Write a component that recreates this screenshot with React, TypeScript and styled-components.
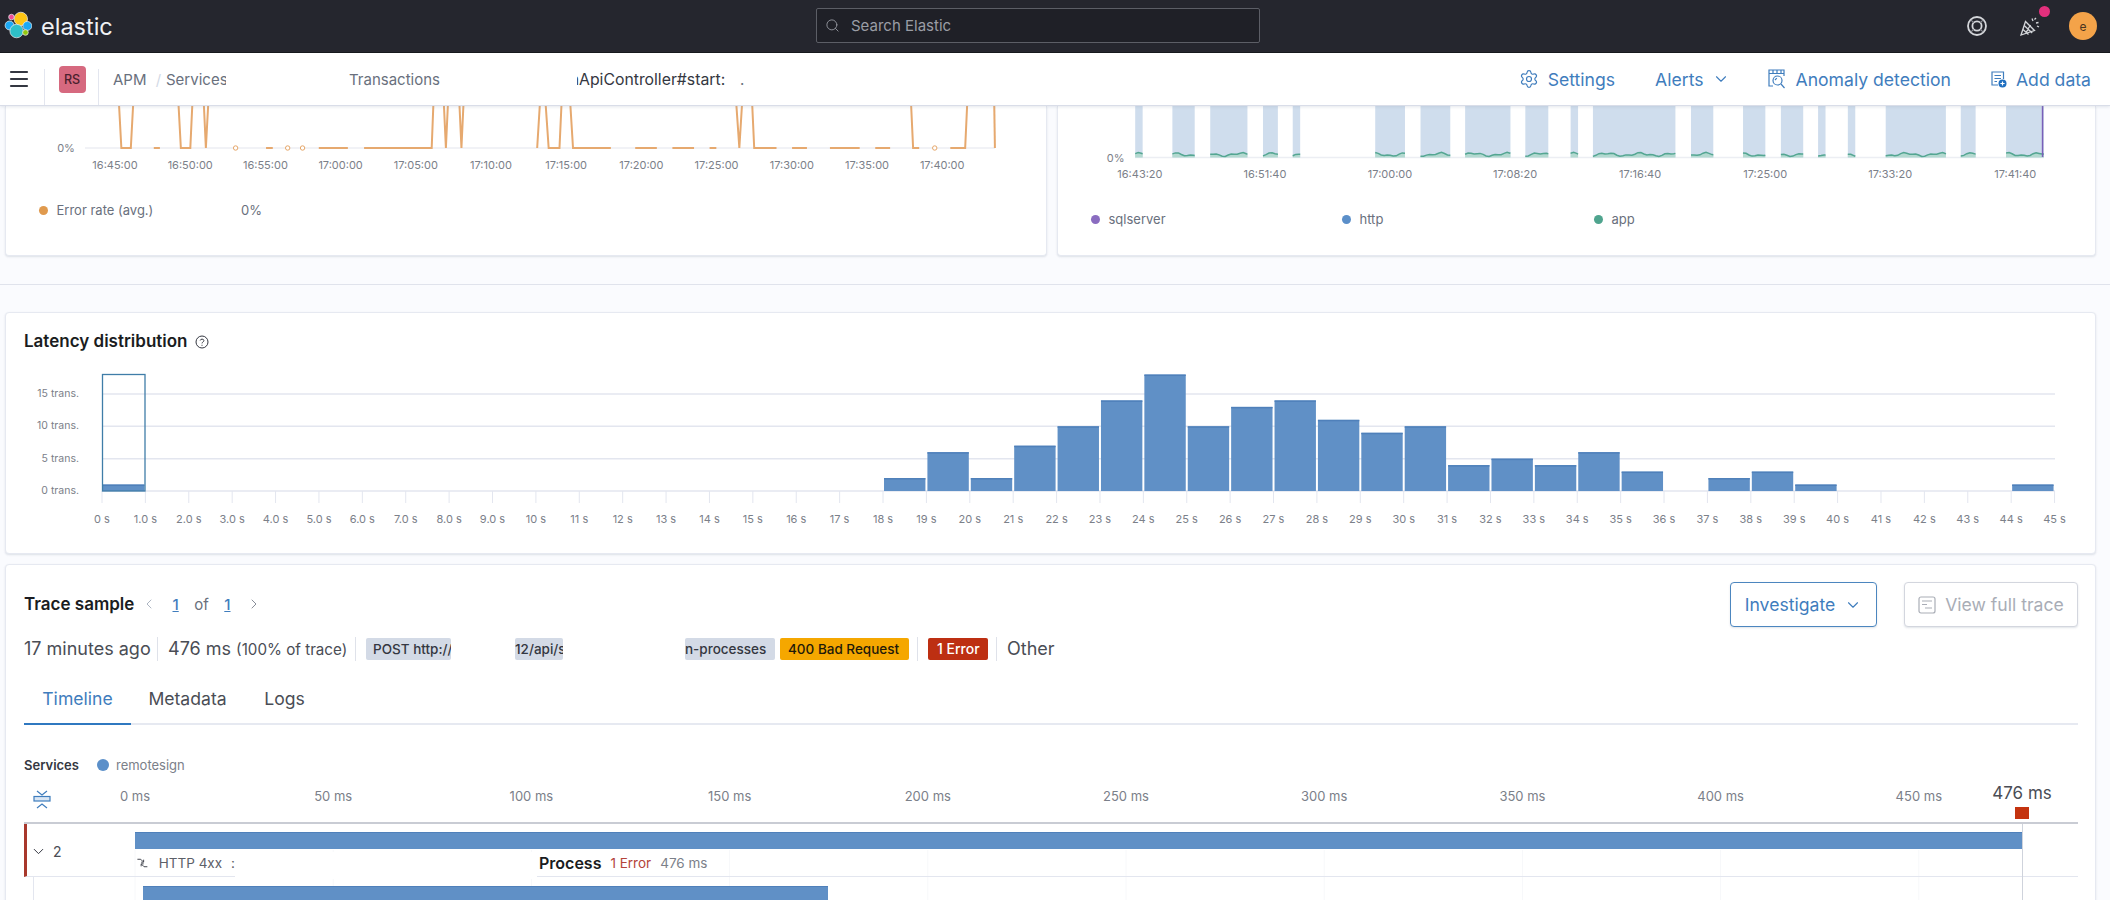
import React from 'react'
import styled, { createGlobalStyle } from 'styled-components'
import { ChevronDown, ChevronLeft, ChevronRight, Menu, Search, Settings } from 'lucide-react'

const GlobalStyle = createGlobalStyle`
  html, body {
    margin: 0;
    padding: 0;
    height: 900px;
    overflow: hidden;
    background: #fafbfe;
    font-family: Inter, "Noto Sans", sans-serif;
    color: #343741;
  }
  svg text {
    font-family: Inter, "Noto Sans", sans-serif;
  }
`

const BLUE = '#3f7dbd'
const ux = (u: number) => u / 1.479
const ux2 = (u: number) => 1050 + u / 1.479

const Page = styled.div`
  width: 2110px;
  height: 900px;
  overflow: hidden;
`

const TopBar = styled.header`
  height: 52px;
  background: #25262e;
  border-bottom: 1px solid #111318;
  display: flex;
  align-items: center;
  position: relative;
`

const Brand = styled.div`
  display: flex;
  align-items: center;
  width: 816px;
  padding-left: 4px;
  box-sizing: border-box;
  color: #f0f1f3;
  font-size: 23.5px;
  gap: 9px;
  svg {
    margin-bottom: 3px;
  }
`

const SearchBox = styled.div`
  width: 444px;
  height: 35px;
  margin-bottom: 2px;
  box-sizing: border-box;
  border: 1px solid #5c5e66;
  border-radius: 2px;
  background: #1f2027;
  display: flex;
  align-items: center;
  padding-left: 8px;
  gap: 11px;
  color: #9a9da5;
  font-size: 15px;
`

const TopIcons = styled.div`
  margin-left: auto;
  display: flex;
  align-items: center;
  padding-right: 13px;
  color: #d4d6da;
`

const IconSlot = styled.span<{ $w: number }>`
  width: ${(p) => p.$w}px;
  display: flex;
  justify-content: center;
  position: relative;
`

const Ping = styled.span`
  position: absolute;
  top: -9px;
  right: 19px;
  width: 11px;
  height: 11px;
  border-radius: 50%;
  background: #e3307d;
`

const Avatar = styled.span`
  width: 28px;
  height: 28px;
  border-radius: 50%;
  background: #f4a349;
  color: #4b3520;
  font-size: 12px;
  display: flex;
  align-items: center;
  justify-content: center;
`

const SubBar = styled.nav`
  height: 53px;
  box-sizing: border-box;
  background: #fff;
  border-bottom: 1px solid #d9dde8;
  box-shadow: 0 1px 3px rgba(152, 162, 179, 0.25);
  display: flex;
  align-items: center;
  position: relative;
  font-size: 15px;
  color: #69707d;
`

const NavCell = styled.div<{ $w: number; $pl?: number }>`
  width: ${(p) => p.$w}px;
  height: 100%;
  flex: none;
  display: flex;
  align-items: center;
  justify-content: ${(p) => (p.$pl ? 'flex-start' : 'center')};
  padding-left: ${(p) => p.$pl ?? 0}px;
  box-sizing: border-box;
  position: relative;
  &::after {
    content: '';
    position: absolute;
    right: 0;
    bottom: 0;
    width: 1px;
    height: 36px;
    background: #e3e6ef;
  }
`

const RsBadge = styled.span`
  width: 27px;
  height: 27px;
  border-radius: 4px;
  background: #d6697f;
  color: #4a1f2d;
  font-size: 12.5px;
  font-weight: 500;
  display: flex;
  align-items: center;
  justify-content: center;
`

const Crumbs = styled.div`
  display: flex;
  align-items: center;
  padding-left: 14px;
`

const Crumb = styled.span<{ $w: number; $ml?: number; $indent?: number }>`
  width: ${(p) => p.$w}px;
  margin-left: ${(p) => p.$ml ?? 0}px;
  text-indent: ${(p) => p.$indent ?? 0}px;
  overflow: hidden;
  white-space: nowrap;
  flex: none;
`

const CrumbSlash = styled(Crumb)`
  color: #d3dae6;
  text-align: center;
`

const CrumbCurrent = styled(Crumb)`
  color: #343741;
  font-size: 15.8px;
`

const NavLinks = styled.div`
  margin-left: auto;
  display: flex;
  align-items: center;
  padding-right: 19px;
  color: ${BLUE};
  font-size: 17.6px;
`

const NavLink = styled.span<{ $ml: number; $gap: number }>`
  display: flex;
  align-items: center;
  margin-left: ${(p) => p.$ml}px;
  gap: ${(p) => p.$gap}px;
  white-space: nowrap;
`

const Main = styled.main`
  padding: 0 14px 0 5px;
`

const TopRow = styled.div`
  display: grid;
  grid-template-columns: 1042px 1039px;
  gap: 10px;
  height: 150px;
`

const Card = styled.section`
  background: #fff;
  border: 1px solid #e6e9f1;
  border-radius: 4px;
  box-shadow: 0 1px 2px rgba(152, 162, 179, 0.3);
  box-sizing: border-box;
`

const TopCard = styled(Card)`
  border-top: none;
  border-radius: 0 0 4px 4px;
  overflow: hidden;
`

const ChartSvg = styled.svg`
  display: block;
`

const Legend = styled.div<{ $mt: number }>`
  display: flex;
  margin-top: ${(p) => p.$mt}px;
  font-size: 13px;
  color: #69707d;
  align-items: center;
  height: 18px;
  padding-left: 33px;
`

const LegendItem = styled.span<{ $w: number }>`
  width: ${(p) => p.$w}px;
  display: flex;
  align-items: center;
  gap: 8.5px;
  flex: none;
`

const Dot = styled.i<{ $c: string; $size?: number }>`
  width: ${(p) => p.$size ?? 9}px;
  height: ${(p) => p.$size ?? 9}px;
  border-radius: 50%;
  background: ${(p) => p.$c};
  flex: none;
`

const Divider = styled.hr`
  border: none;
  height: 1px;
  background: #e0e3ec;
  margin: 28px -14px 27px -5px;
`

const LatencyCard = styled(Card)`
  height: 242px;
`

const CardTitle = styled.h2`
  margin: 0;
  padding: 17px 0 0 18px;
  height: 29px;
  font-size: 17px;
  line-height: 22px;
  font-weight: 600;
  color: #1a1c21;
  display: flex;
  align-items: flex-start;
  gap: 7px;
  svg {
    margin-top: 5px;
  }
`

const TraceCard = styled(Card)`
  margin-top: 10px;
  height: 400px;
  padding: 17px 17px 0 18px;
  overflow: hidden;
`

const TraceHead = styled.div`
  display: flex;
  align-items: center;
  height: 45px;
`

const TraceTitle = styled.h2`
  margin: 0 0 2px;
  font-size: 17px;
  font-weight: 600;
  color: #1a1c21;
  width: 117px;
`

const Pager = styled.div`
  display: flex;
  align-items: center;
  font-size: 15px;
  color: #69707d;
  gap: 15.5px;
  margin-bottom: 1px;
`

const PageLink = styled.a`
  color: ${BLUE};
  font-weight: 500;
  text-decoration: underline;
`

const TraceButton = styled.button<{ $off?: boolean; $ml: number | 'auto'; $w: number }>`
  width: ${(p) => p.$w}px;
  height: 45px;
  margin-left: ${(p) => (p.$ml === 'auto' ? 'auto' : `${p.$ml}px`)};
  border: 1px solid ${(p) => (p.$off ? '#d3d6de' : '#4c86bf')};
  border-radius: 4px;
  background: #fff;
  color: ${(p) => (p.$off ? '#a9adb6' : BLUE)};
  font: 400 17.6px Inter, sans-serif;
  display: flex;
  align-items: center;
  justify-content: center;
  gap: 9px;
  padding: 0;
  box-shadow: 0 1px 2px rgba(152, 162, 179, 0.3);
`

const MetaRow = styled.div`
  display: flex;
  align-items: center;
  height: 24px;
  margin-top: 10px;
  font-size: 18px;
  color: #4a4d55;
`

const MetaPart = styled.span<{ $sep?: boolean; $w: number; $pl?: number }>`
  width: ${(p) => p.$w}px;
  height: 24px;
  line-height: 24px;
  padding-left: ${(p) => p.$pl ?? 0}px;
  flex: none;
  white-space: nowrap;
  border-right: ${(p) => (p.$sep ? '1px solid #dfe2ea' : 'none')};
  small {
    font-size: 15.2px;
  }
`

const Badge = styled.span<{ $bg?: string; $fg?: string; $w: number; $ml?: number; $pl?: number; $fs?: number }>`
  width: ${(p) => p.$w}px;
  height: 22px;
  margin-left: ${(p) => p.$ml ?? 0}px;
  padding-left: ${(p) => p.$pl ?? 0}px;
  flex: none;
  overflow: hidden;
  white-space: nowrap;
  box-sizing: border-box;
  border-radius: 2px;
  background: ${(p) => p.$bg ?? '#d3dae6'};
  color: ${(p) => p.$fg ?? '#343741'};
  font-size: ${(p) => p.$fs ?? 13.5}px;
  font-weight: 500;
  line-height: 22px;
`

const Tabs = styled.div`
  display: flex;
  margin-top: 12px;
  height: 50px;
  box-sizing: content-box;
  border-bottom: 2px solid #e6e9f1;
`

const Tab = styled.span<{ $active?: boolean; $w: number }>`
  width: ${(p) => p.$w}px;
  height: 50px;
  box-sizing: content-box;
  display: flex;
  align-items: center;
  justify-content: center;
  font-size: 17.6px;
  font-weight: 400;
  color: ${(p) => (p.$active ? BLUE : '#4a4d55')};
  border-bottom: 2px solid ${(p) => (p.$active ? '#2f78c0' : 'transparent')};
`

const ServicesRow = styled.div`
  display: flex;
  align-items: center;
  height: 20px;
  margin-top: 30px;
  gap: 7px;
  font-size: 13px;
  color: #7b8089;
  b {
    color: #343741;
    font-weight: 600;
    margin-right: 11px;
  }
`

const Waterfall = styled.div`
  position: relative;
  border-top: 2px solid #c9ccd4;
`

const FaintGrid = styled.svg`
  position: absolute;
  left: 0;
  top: 0;
  pointer-events: none;
`

const Row = styled.div`
  height: 52px;
  position: relative;
  border-left: 3px solid #a8382c;
  border-bottom: 1px solid #e3e6ef;
  display: flex;
`

const RowCount = styled.div`
  width: 108px;
  flex: none;
  display: flex;
  align-items: center;
  gap: 6px;
  padding-left: 3px;
  box-sizing: border-box;
  font-size: 14px;
  color: #4a4d55;
  padding-top: 2px;
`

const RowBody = styled.div`
  flex: 1;
  padding-top: 8px;
`

const Bar = styled.div<{ $w: number; $ml?: number }>`
  width: ${(p) => p.$w}px;
  height: 17px;
  margin-left: ${(p) => p.$ml ?? 0}px;
  background: #6090c6;
  border-top: 1px solid #4f80ba;
  box-sizing: border-box;
  position: relative;
`

const SpanLabel = styled.div`
  display: flex;
  align-items: center;
  height: 27px;
  font-size: 13.5px;
  color: #5c6068;
`

const HttpTag = styled.span`
  width: 100px;
  display: flex;
  align-items: center;
  gap: 11px;
  white-space: nowrap;
  flex: none;
  padding-left: 2px;
  box-sizing: border-box;
  overflow: hidden;
`

const HttpRest = styled.span`
  margin-left: -2px;
`

const SpanName = styled.strong`
  font-size: 16px;
  font-weight: 600;
  color: #1a1c21;
  margin-left: 304px;
  position: relative;
`

const SpanError = styled.span`
  color: #b4443a;
  margin-left: 9px;
  position: relative;
`

const SpanTime = styled.span`
  margin-left: 9px;
  color: #7b8089;
  position: relative;
`

const Mask = styled.div`
  position: absolute;
  left: 208px;
  width: 302px;
  top: 28px;
  height: 27px;
  background: #fff;
`

const ChildRow = styled.div`
  margin-left: 9px;
  border-left: 1px solid #e3e6ef;
  padding-top: 9px;
  position: relative;
  height: 40px;
`

const End = styled.div`
  position: absolute;
  left: 1998px;
  top: 0;
  width: 1px;
  height: 90px;
  background: #cfd3dc;
`

const ElasticLogo = () => (
  <svg width="28" height="28" viewBox="2 2 30 30">
    <g stroke="#e8e9ec" strokeWidth="0.8">
      <circle cx="20" cy="10.5" r="7.2" fill="#fec514" />
      <circle cx="10" cy="8.5" r="3" fill="#f04e98" />
      <circle cx="8" cy="17.5" r="4.8" fill="#1ba9f5" />
      <circle cx="27" cy="18" r="4.8" fill="#1ba9f5" />
      <circle cx="15.5" cy="23.5" r="7.2" fill="#2ec0c8" />
      <circle cx="25" cy="25" r="3" fill="#93c90e" />
    </g>
  </svg>
)

const RingIcon = () => (
  <svg width="22" height="22" viewBox="0 0 22 22" fill="none" stroke="#d4d6da" strokeWidth="1.8">
    <circle cx="11" cy="11" r="9" />
    <circle cx="11" cy="11" r="4.6" />
    <path d="M4.8 4.8l3 3M17.2 4.8l-3 3M4.8 17.2l3-3M17.2 17.2l-3-3" stroke="#8e9097" strokeWidth="1.1" />
  </svg>
)

const CheerIcon = () => (
  <svg width="22" height="22" viewBox="0 0 22 22" fill="none" stroke="#d4d6da" strokeWidth="1.3">
    <path d="M2 20L6.5 6.5L15.5 15.5Z" />
    <path d="M4 14.5l5.5 5M5.2 10.5l8 7.5M9 14l2.5-4M7 17l3-3" />
    <path d="M13 3.5l1 2.5M17 8l2.5-.5M15.5 4.5l1.5-1.5M18 11l2 1" />
  </svg>
)

const AnomalyIcon = () => (
  <svg width="18" height="20" viewBox="0 0 18 20" fill="none" stroke={BLUE} strokeWidth="1.2">
    <path d="M5 17H1V1h15v6" />
    <path d="M1 4.5h15M5 1v3.5M9 1v3.5M13 1v3.5" />
    <circle cx="9.5" cy="11.5" r="4.5" />
    <path d="M13 15l3.5 4" />
    <path d="M7 11l1.8-1.8" />
  </svg>
)

const AddDataIcon = () => (
  <svg width="16" height="17" viewBox="0 0 16 17" fill="none" stroke={BLUE} strokeWidth="1.2">
    <path d="M7 14H1V1h11.5v7" />
    <path d="M3.5 4.5h6.5M3.5 7.5h6.5M3.5 10.5h2.5" />
    <circle cx="11.5" cy="12.5" r="4" fill="#1f6fc0" stroke="none" />
    <path d="M11.5 10.4v4.2M9.4 12.5h4.2" stroke="#fff" />
  </svg>
)

const TraceDocIcon = () => (
  <svg width="18" height="18" viewBox="0 0 18 18" fill="none" stroke="#a9adb6" strokeWidth="1.2">
    <rect x="1" y="1" width="16" height="16" rx="2" />
    <path d="M4 5h10M4 8.5h5M7 12h7" />
  </svg>
)

const HttpIcon = () => (
  <svg width="13" height="14" viewBox="0 0 13 14" fill="none" stroke="#343741" strokeWidth="1.1">
    <path d="M0.5 2.5h4l3 3M5 6h3V3" />
    <path d="M12.5 11.5h-4l-3-3M8 8H5v3" />
  </svg>
)

const HelpIcon = () => (
  <svg width="14" height="14" viewBox="0 0 14 14" fill="none" stroke="#343741" strokeWidth="1">
    <circle cx="7" cy="7" r="6" />
    <path d="M5.2 5.5C5.4 3.6 8.9 3.7 8.9 5.6C8.9 7 7 7 7 8.4" />
    <path d="M7 9.8v1" />
  </svg>
)

// pieces of the error rate line, in crop units of the chart
const errorSegments: number[][][] = [
  [[171, 60], [178, 148], [192, 148], [199, 60]],
  [[226, 148], [235, 148]],
  [[259, 60], [266, 148], [280, 148], [286, 60]],
  [[297, 60], [303, 148], [310, 60]],
  [[392, 148], [402, 148]],
  [[470, 148], [513, 148]],
  [[537, 148], [637, 148], [642, 60]],
  [[652, 60], [658, 148], [664, 60]],
  [[675, 60], [681, 148], [687, 60]],
  [[793, 148], [801, 60], [810, 148], [826, 148], [832, 60]],
  [[838, 60], [846, 148], [902, 148]],
  [[938, 148], [970, 148]],
  [[993, 148], [1025, 148]],
  [[1048, 148], [1058, 148]],
  [[1083, 60], [1092, 148], [1100, 60]],
  [[1108, 60], [1114, 148], [1147, 148]],
  [[1170, 148], [1192, 148]],
  [[1226, 148], [1270, 148]],
  [[1293, 148], [1315, 148]],
  [[1343, 60], [1349, 148], [1358, 148]],
  [[1404, 148], [1426, 148], [1432, 60]],
  [[1468, 60], [1470, 148]],
]
const errorDots = [347, 424, 446, 1381]
const errorTicks = ['16:45:00', '16:50:00', '16:55:00', '17:00:00', '17:05:00', '17:10:00', '17:15:00', '17:20:00', '17:25:00', '17:30:00', '17:35:00', '17:40:00']

const ErrorChart = () => (
  <ChartSvg width={1041} height={71} viewBox="5 106 1041 71">
    <line x1={84} x2={994} y1={148} y2={148} stroke="#eceef3" strokeWidth={1.5} />
    {errorSegments.map((seg, i) => (
      <polyline
        key={i}
        points={seg.map(([u, y]) => `${ux(u)},${y}`).join(' ')}
        fill="none"
        stroke="#e6a96f"
        strokeWidth={2}
      />
    ))}
    {errorDots.map((u) => (
      <circle key={u} cx={ux(u)} cy={148} r={2.2} fill="#fff" stroke="#e6a76a" strokeWidth={1} />
    ))}
    <text x={65} y={152} textAnchor="middle" fontSize={11} fill="#7b8089">0%</text>
    {errorTicks.map((t, i) => (
      <text key={t} x={114 + i * 75.2} y={169} textAnchor="middle" fontSize={11} fill="#7b8089">{t}</text>
    ))}
  </ChartSvg>
)

const spanBlocks = [[126, 137], [181, 214], [237, 292], [315, 337], [359, 370], [481, 525], [548, 592], [614, 681], [703, 737], [770, 781], [803, 925], [948, 981], [1025, 1058], [1081, 1114], [1136, 1147], [1180, 1191], [1236, 1325], [1347, 1369], [1414, 1470]]
const spanTicks = ['16:43:20', '16:51:40', '17:00:00', '17:08:20', '17:16:40', '17:25:00', '17:33:20', '17:41:40']

const wobble = (x: number) => 154.5 - 1.3 * Math.sin(x / 5.3) - 0.8 * Math.sin(x / 2.1)

const SpanChart = () => (
  <ChartSvg width={1037} height={80} viewBox="1058 106 1037 80">
    <line x1={1135} x2={2044} y1={157.5} y2={157.5} stroke="#eceef3" strokeWidth={1.5} />
    {spanBlocks.map(([a, b]) => {
      const x1 = ux2(a)
      const x2 = ux2(b)
      const pts: string[] = []
      for (let x = x1; x < x2; x += 3) pts.push(`${x.toFixed(1)},${wobble(x).toFixed(1)}`)
      pts.push(`${x2.toFixed(1)},${wobble(x2).toFixed(1)}`)
      return (
        <g key={a}>
          <rect x={x1} y={106} width={x2 - x1} height={51.5} fill="#cfdded" />
          <polygon points={`${x1},157.5 ${pts.join(' ')} ${x2},157.5`} fill="#b3d9d0" />
          <polyline points={pts.join(' ')} fill="none" stroke="#54a692" strokeWidth={1.5} />
        </g>
      )
    })}
    <line x1={ux2(1468)} x2={ux2(1468)} y1={106} y2={157} stroke="#7a5fb8" strokeWidth={1.5} />
    <text x={ux2(97)} y={162} textAnchor="middle" fontSize={11} fill="#7b8089">0%</text>
    {spanTicks.map((t, i) => (
      <text key={t} x={ux2(133) + i * 125.05} y={178} textAnchor="middle" fontSize={11} fill="#7b8089">{t}</text>
    ))}
  </ChartSvg>
)

const histo: Record<number, number> = {
  0: 1, 18: 2, 19: 6, 20: 2, 21: 7, 22: 10, 23: 14, 24: 18, 25: 10, 26: 13, 27: 14, 28: 11, 29: 9, 30: 10,
  31: 4, 32: 5, 33: 4, 34: 6, 35: 3, 37: 2, 38: 3, 39: 1, 44: 1,
}
const BIN = 43.39
const ONE = 6.47
const binLabel = (i: number) => (i === 0 ? '0 s' : i < 10 ? `${i}.0 s` : `${i} s`)

const LatencyChart = () => (
  <ChartSvg width={2089} height={172} viewBox="6 358 2089 172">
    {[0, 5, 10, 15].map((v) => (
      <g key={v}>
        <line x1={102} x2={2055} y1={490 - v * ONE} y2={490 - v * ONE} stroke="#e3e6ef" strokeWidth={1.5} />
        <text x={79} y={493 - v * ONE} textAnchor="end" fontSize={10.5} fill="#7b8089">{v} trans.</text>
      </g>
    ))}
    {Array.from({ length: 46 }, (_, i) => (
      <g key={i}>
        <line x1={102 + i * BIN} x2={102 + i * BIN} y1={490} y2={502} stroke="#e3e6ef" />
        <text x={102 + i * BIN} y={522} textAnchor="middle" fontSize={11} fill="#7b8089">{binLabel(i)}</text>
      </g>
    ))}
    {Object.entries(histo).map(([k, v]) => {
      const x = 102 + Number(k) * BIN + 1
      return (
        <g key={k}>
          <rect x={x} y={490 - v * ONE} width={BIN - 2} height={v * ONE} fill="#6090c6" />
          <rect x={x} y={490 - v * ONE} width={BIN - 2} height={1.5} fill="#4f80ba" />
        </g>
      )
    })}
    <rect x={102.5} y={373.5} width={42.5} height={116.5} fill="none" stroke="#3f7da8" strokeWidth={1.3} />
  </ChartSvg>
)

const axisTicks = [0, 50, 100, 150, 200, 250, 300, 350, 400, 450]
const MS = 198.2 / 50

const TimeAxis = () => (
  <ChartSvg width={2054} height={47} viewBox="24 774 2054 47">
    <g stroke={BLUE} strokeWidth={1.2} fill="none">
      <path d="M37 790l5 4 5-4" />
      <rect x={34} y={795.5} width={16} height={4.5} fill="#d9e6f4" />
      <path d="M37 807l5-4 5 4" />
    </g>
    {axisTicks.map((t) => (
      <text key={t} x={135 + t * MS} y={800} textAnchor="middle" fontSize={13} fill="#7b8089">{t} ms</text>
    ))}
    <text x={2022} y={798} textAnchor="middle" fontSize={17} fill="#4a4d55">476 ms</text>
    <rect x={2015} y={806} width={14} height={12} fill="#c4330f" />
  </ChartSvg>
)

const App = () => (
  <Page>
    <GlobalStyle />
    <TopBar>
      <Brand>
        <ElasticLogo />
        elastic
      </Brand>
      <SearchBox>
        <Search size={15} strokeWidth={1.4} />
        Search Elastic
      </SearchBox>
      <TopIcons>
        <IconSlot $w={28}><RingIcon /></IconSlot>
        <IconSlot $w={78}><CheerIcon /><Ping /></IconSlot>
        <Avatar>e</Avatar>
      </TopIcons>
    </TopBar>
    <SubBar>
      <NavCell $w={45} $pl={7}><Menu size={24} strokeWidth={2.2} color="#343741" /></NavCell>
      <NavCell $w={54}><RsBadge>RS</RsBadge></NavCell>
      <Crumbs>
        <Crumb $w={34}>APM</Crumb>
        <CrumbSlash $w={15} $ml={4}>/</CrumbSlash>
        <Crumb $w={60}>Services</Crumb>
        <Crumb $w={92} $ml={123}>Transactions</Crumb>
        <CrumbCurrent $w={148} $ml={136} $indent={-31}>SignApiController#start:</CrumbCurrent>
        <Crumb $w={4} $ml={15}>.</Crumb>
      </Crumbs>
      <NavLinks>
        <NavLink $ml={0} $gap={9}><Settings size={20} strokeWidth={1.4} />Settings</NavLink>
        <NavLink $ml={40} $gap={8}>Alerts<ChevronDown size={18} strokeWidth={1.5} /></NavLink>
        <NavLink $ml={38} $gap={10}><AnomalyIcon />Anomaly detection</NavLink>
        <NavLink $ml={40} $gap={9}><AddDataIcon />Add data</NavLink>
      </NavLinks>
    </SubBar>
    <Main>
      <TopRow>
        <TopCard>
          <ErrorChart />
          <Legend $mt={24}>
            <LegendItem $w={202}><Dot $c="#e09a4e" />Error rate (avg.)</LegendItem>
            <span>0%</span>
          </Legend>
        </TopCard>
        <TopCard>
          <SpanChart />
          <Legend $mt={24}>
            <LegendItem $w={251}><Dot $c="#8a6cc0" />sqlserver</LegendItem>
            <LegendItem $w={252}><Dot $c="#5b8fc9" />http</LegendItem>
            <LegendItem $w={100}><Dot $c="#4fa48e" />app</LegendItem>
          </Legend>
        </TopCard>
      </TopRow>
      <Divider />
      <LatencyCard>
        <CardTitle>Latency distribution <HelpIcon /></CardTitle>
        <LatencyChart />
      </LatencyCard>
      <TraceCard>
        <TraceHead>
          <TraceTitle>Trace sample</TraceTitle>
          <Pager>
            <ChevronLeft size={16} strokeWidth={1.2} color="#98a2b3" />
            <PageLink>1</PageLink>
            <span>of</span>
            <PageLink>1</PageLink>
            <ChevronRight size={16} strokeWidth={1.2} color="#69707d" />
          </Pager>
          <TraceButton $ml="auto" $w={147}>
            Investigate <ChevronDown size={18} strokeWidth={1.5} />
          </TraceButton>
          <TraceButton $off $ml={27} $w={174}><TraceDocIcon />View full trace</TraceButton>
        </TraceHead>
        <MetaRow>
          <MetaPart $w={133} $sep>17 minutes ago</MetaPart>
          <MetaPart $w={187} $pl={10} $sep>476 ms <small>(100% of trace)</small></MetaPart>
          <Badge $w={85} $ml={10} $pl={7}>POST http://</Badge>
          <Badge $w={48} $ml={64}>12/api/s</Badge>
          <Badge $w={90} $ml={122}>n-processes</Badge>
          <Badge $w={129} $ml={5} $pl={8} $bg="#f5a700" $fg="#1f1a0a">400 Bad Request</Badge>
          <MetaPart $w={8} $sep />
          <Badge $w={60} $ml={10} $pl={9} $fs={14} $bg="#bd2f12" $fg="#fff">1 Error</Badge>
          <MetaPart $w={8} $sep />
          <MetaPart $w={60} $pl={10}>Other</MetaPart>
        </MetaRow>
        <Tabs>
          <Tab $w={107} $active>Timeline</Tab>
          <Tab $w={113}>Metadata</Tab>
          <Tab $w={81}>Logs</Tab>
        </Tabs>
        <ServicesRow>
          <b>Services</b>
          <Dot $c="#5b8fc9" $size={12} />
          <span>remotesign</span>
        </ServicesRow>
        <TimeAxis />
        <Waterfall>
          <FaintGrid width={2054} height={90} viewBox="0 0 2054 90">
            {axisTicks.map((t) => (
              <line key={t} x1={111 + t * MS} x2={111 + t * MS} y1={26} y2={90} stroke="#f7f8fa" />
            ))}
          </FaintGrid>
          <Row>
            <RowCount><ChevronDown size={17} strokeWidth={1.4} color="#343741" />2</RowCount>
            <RowBody>
              <Bar $w={1887} />
              <SpanLabel>
                <HttpTag><HttpIcon /><span>HTTP 4xx</span><HttpRest>:</HttpRest></HttpTag>
                <SpanName>Process</SpanName>
                <SpanError>1 Error</SpanError>
                <SpanTime>476 ms</SpanTime>
              </SpanLabel>
            </RowBody>
            <Mask />
          </Row>
          <ChildRow>
            <Bar $w={685} $ml={109} />
          </ChildRow>
          <End />
        </Waterfall>
      </TraceCard>
    </Main>
  </Page>
)

export default App
